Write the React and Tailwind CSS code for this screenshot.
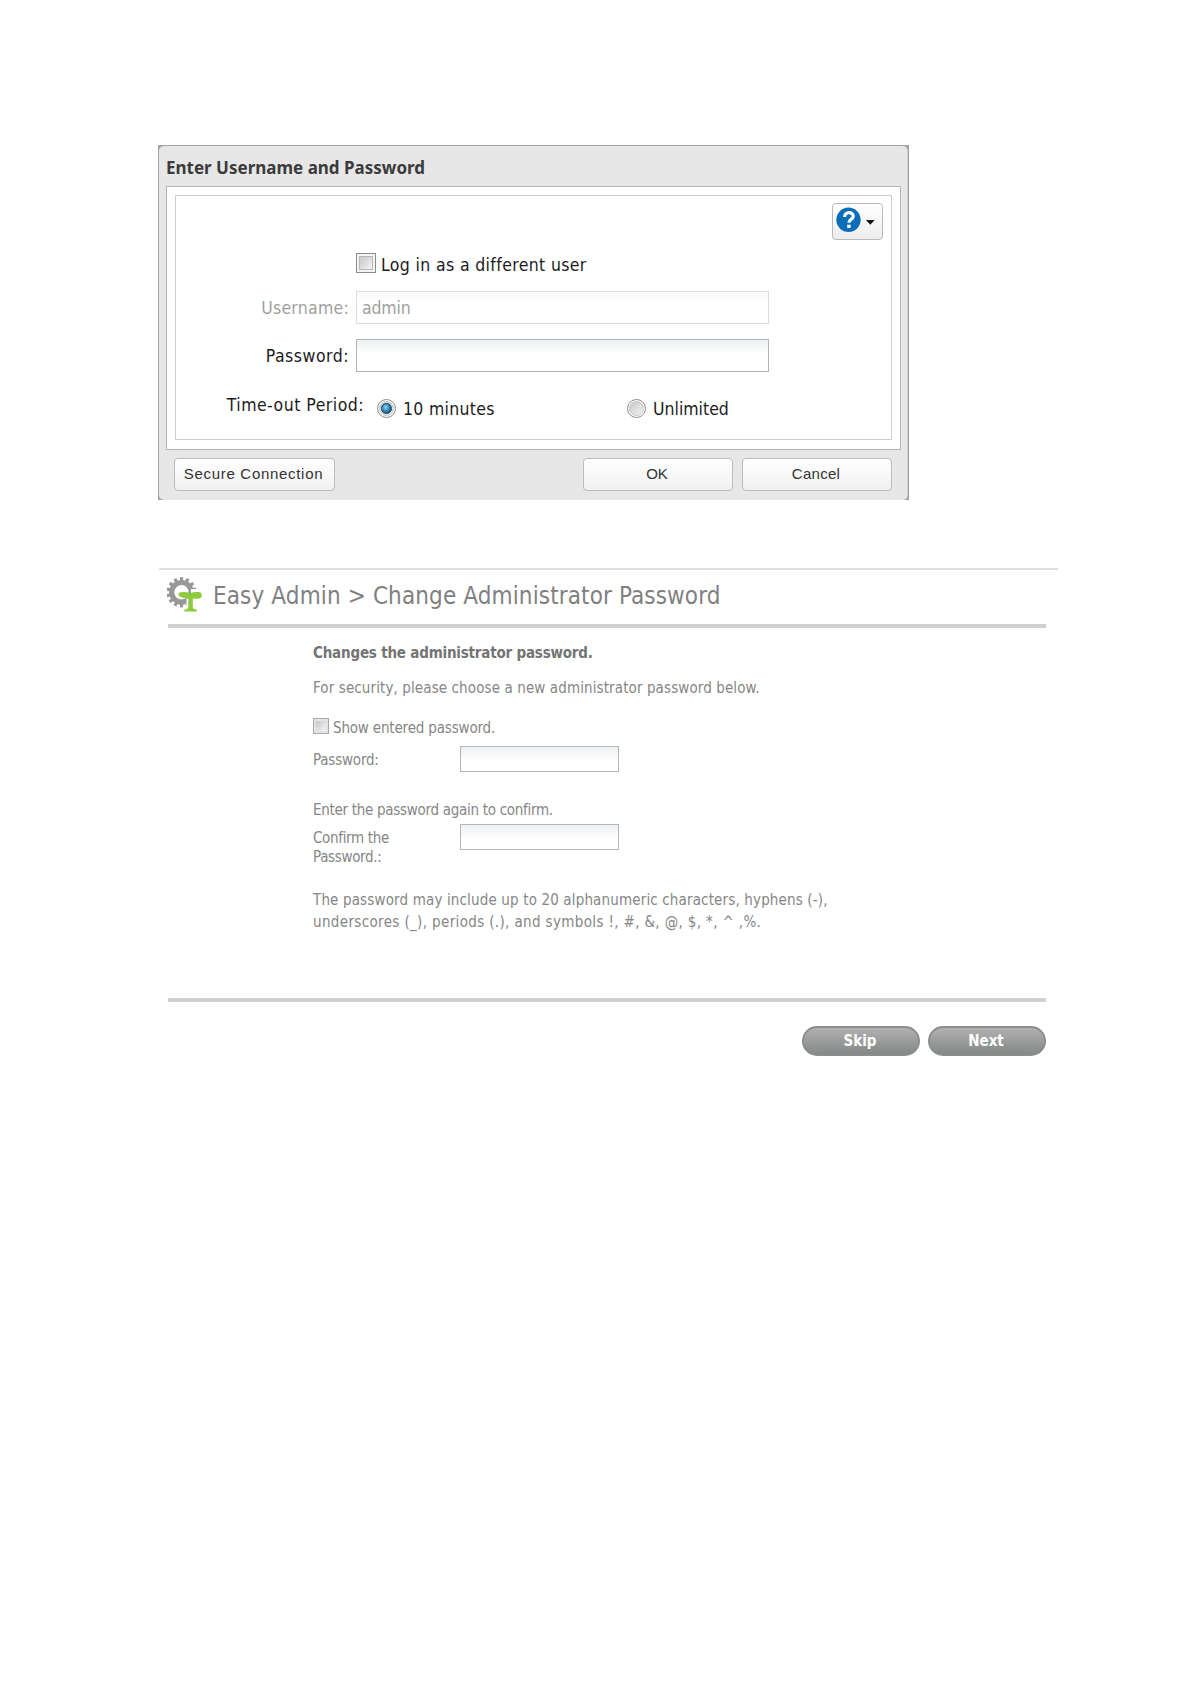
import React, { useState } from 'react'

const tahoma = "font-['DejaVu_Sans_Condensed','DejaVu_Sans',sans-serif]"

function GearIcon() {
  const teeth = Array.from({ length: 14 }, (_, i) => (i * 360) / 14)
  return (
    <svg width="36" height="36" viewBox="0 0 36 36" className="shrink-0">
      <circle cx="14.5" cy="15.3" r="9.8" fill="none" stroke="#989898" strokeWidth="5.2" />
      {teeth.map((a) => (
        <rect key={a} x="12.9" y="0.2" width="3.2" height="4" fill="#989898" transform={`rotate(${a} 14.5 15.3)`} />
      ))}
      <path d="M19.5 21.5h9v14h-9z M24 12h12v10H24z" fill="#fff" />
      <path
        d="M13 15.600c2.500-.9 6-.8 10.400.5 3-1.300 6.600-1.500 9.300-.9 2.700.8 2.700 4.800.3 6-2.400.8-5 .7-7.200.2v10.200c2.400.3 4.400 1.200 4.400 3H17c0-1.800 1.800-2.700 4.300-3V20.700c-2.600.5-5.300.3-7.600-.7-2.900-1.400-2.900-3.700-.7-4.400z"
        fill="#8ccb3c"
      />
    </svg>
  )
}

function HelpButton() {
  return (
    <button type="button" className="flex h-[37px] w-[51px] items-start rounded-[4px] border border-[#b9b9b9] bg-linear-to-b from-white to-[#ededed] pl-[3px]">
      <svg width="46" height="34" viewBox="0 0 46 34">
        <circle cx="12.5" cy="15.8" r="12.2" fill="#0b6db7" />
        <path d="M8.600 13c0-5.800 8.600-5.600 8.600-.8 0 3.200-4.300 3-4.300 6.600" fill="none" stroke="#fff" strokeWidth="3.2" />
        <rect x="11.2" y="20.7" width="3.4" height="3.2" fill="#fff" />
        <path d="M30 16h8.600l-4.300 4.700z" fill="#111" />
      </svg>
    </button>
  )
}

function Radio({ checked, onClick }) {
  return (
    <button type="button" onClick={onClick} className="mt-[4px] flex size-[19px] shrink-0 items-center justify-center rounded-full border border-[#8c8c8c] bg-white p-px">
      <span className="flex size-full items-center justify-center rounded-full border border-[#c4c4c4] bg-linear-to-br from-[#c9c9c9] to-[#f2f2f2]">
        {checked && <span className="size-[11px] shrink-0 rounded-full border border-[#173f5c] bg-radial-[at_40%_35%] from-[#8fd8f5] via-[#2585b5] to-[#123a58]" />}
      </span>
    </button>
  )
}

function DialogButton({ className, children }) {
  return (
    <button
      type="button"
      className={`h-[33px] rounded-[4px] border border-[#bdbdbd] bg-linear-to-b from-white to-[#f1f1f1] pr-[2px] font-['Liberation_Sans',Arial,sans-serif] text-[15px] text-[#333] ${className}`}
    >
      {children}
    </button>
  )
}

function LoginDialog() {
  const [timeout, setTimeoutPeriod] = useState('10')

  return (
    <div className="h-[355px] w-[751px] bg-[#a3a3a3] px-px pt-px">
      <div className="h-full rounded-[5px] border-r border-[#cfcfcf] bg-[#e7e7e7]">
        <h2 className="flex h-10 items-center pt-[3px] pl-[7px] font-['Noto_Sans',sans-serif] text-[17px] leading-5 font-bold text-[#3b3b3b]">
          Enter Username and Password
        </h2>

        <div className="ml-[7px] h-[264px] w-[735px] border border-[#b5b5b5] bg-white px-2 pt-2 pb-[9px]">
          <div className="h-full border border-[#cecece] pt-[7px] text-[17.5px] leading-5 text-[#1c1c1c]">
            <div className="flex justify-end pr-[8px]">
              <HelpButton />
            </div>

            <div className="mt-[13px] flex h-[22px] pl-[180px]">
              <span className="flex size-5 items-center justify-center border border-[#8b8b8b] bg-[#f4f4f4]">
                <span className="size-[14px] border border-[#b8b8b8] bg-linear-to-br from-[#c8c8c8] to-[#f4f4f4]" />
              </span>
              <span className="pt-[2px] pl-[5px] tracking-[0.36px]">Log in as a different user</span>
            </div>

            <div className="mt-4 flex items-center text-[#9f9f9f]">
              <label className="w-[173px] pt-px text-right tracking-[0.25px]">Username:</label>
              <div className="ml-[7px] h-[33px] w-[413px] border border-[#dadcdd] bg-linear-to-b from-[#f7f9f9] to-white to-40% pt-[6px] pl-[5px] tracking-[-0.15px]">admin</div>
            </div>

            <div className="mt-[15px] flex items-center">
              <label className="w-[173px] pt-px text-right tracking-[0.5px]">Password:</label>
              <input type="password" className="ml-[7px] h-[33px] w-[413px] border border-[#b3b5bb] bg-linear-to-b from-[#eceff2] to-white to-45% px-2 outline-none" />
            </div>

            <div className="mt-[23px] flex">
              <label className="w-[188px] text-right whitespace-nowrap tracking-[0.48px]">Time-out Period:</label>
              <div className="ml-[12.5px] flex w-[250px]">
                <Radio checked={timeout === '10'} onClick={() => setTimeoutPeriod('10')} />
                <span className="pt-1 pl-[7.5px] tracking-[0.3px]">10 minutes</span>
              </div>
              <Radio checked={timeout === 'unlimited'} onClick={() => setTimeoutPeriod('unlimited')} />
              <span className="pt-1 pl-[7.5px]">Unlimited</span>
            </div>
          </div>
        </div>

        <div className="flex pt-2 pl-[15px]">
          <DialogButton className="w-[161px] tracking-[0.7px]">Secure Connection</DialogButton>
          <DialogButton className="ml-[248px] w-[150px]">OK</DialogButton>
          <DialogButton className="ml-[9px] w-[150px] tracking-[0.3px]">Cancel</DialogButton>
        </div>
      </div>
    </div>
  )
}

function PasswordInput() {
  return (
    <input type="password" className="h-[26px] w-[159px] border border-[#b4b7ba] bg-linear-to-b from-[#edf0f3] to-white to-60% px-1 outline-none" />
  )
}

function PillButton({ children }) {
  return (
    <button type="button" className="h-[30px] w-[118px] rounded-full border-2 border-[#8c8e8d] bg-linear-to-b from-[#b0b1b0] to-[#868888] pr-[2px] pb-px text-[15px] leading-5 font-bold text-white">
      {children}
    </button>
  )
}

function ChangePassword() {
  return (
    <div className="mt-[68px] ml-px w-[899px] border-t-2 border-[#e0e0e0] text-[15px] leading-5 text-[#868686]">
      <div className="flex h-[54px] pt-[7px] pl-2">
        <GearIcon />
        <h1 className="pt-[5px] pl-[10px] text-2xl leading-7 tracking-[0.12px] whitespace-nowrap text-[#808080]">
          Easy Admin &gt; Change Administrator Password
        </h1>
      </div>
      <hr className="ml-[9px] h-1 w-[878px] border-0 bg-[#d0d0d0]" />

      <div className="flex h-[370px] flex-col pl-[154px]">
        <p className="mt-[15px] font-bold tracking-[-0.2px] text-[#747474]">Changes the administrator password.</p>
        <p className="mt-[15px] tracking-[0.11px]">For security, please choose a new administrator password below.</p>
        <div className="mt-5 flex">
          <span className="flex size-4 items-center justify-center border border-[#a8a8a8] bg-[#e4e4e4]">
            <span className="size-[10px] bg-linear-to-br from-[#c6c6c6] to-[#f6f6f6]" />
          </span>
          <span className="pl-1 tracking-[-0.17px]">Show entered password.</span>
        </div>
        <div className="mt-2 flex">
          <label className="w-[147px] pt-1 tracking-[-0.2px]">Password:</label>
          <PasswordInput />
        </div>
        <p className="mt-7 tracking-[-0.29px]">Enter the password again to confirm.</p>
        <div className="mt-1 flex">
          <label className="w-[147px] pt-[5px] leading-[19px] tracking-[-0.33px]">
            Confirm the<br />Password.:
          </label>
          <PasswordInput />
        </div>
        <p className="mt-[23px] leading-[21.5px] whitespace-nowrap">
          <span className="tracking-[0.15px]">The password may include up to 20 alphanumeric characters, hyphens (-),</span>
          <br />
          <span className="tracking-[0.36px]">underscores (_), periods (.), and symbols !, #, &amp;, @, $, *, ^ ,%.</span>
        </p>
      </div>

      <hr className="ml-[9px] h-1 w-[878px] border-0 bg-[#d2d2d2]" />
      <div className="mt-6 flex justify-end gap-2 pr-[12px]">
        <PillButton>Skip</PillButton>
        <PillButton>Next</PillButton>
      </div>
    </div>
  )
}

function App() {
  return (
    <div className={`min-h-[1684px] bg-white pt-[145px] pl-[158px] ${tahoma}`}>
      <LoginDialog />
      <ChangePassword />
    </div>
  )
}

export default App
